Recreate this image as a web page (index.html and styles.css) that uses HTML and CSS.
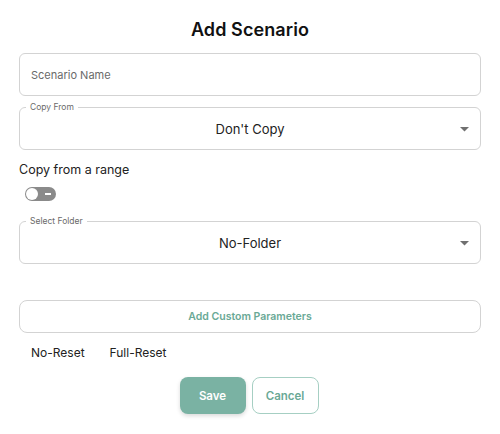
FILE: index.html
```html
<!DOCTYPE html>
<html>
<head>
<meta charset="utf-8">
<link rel="stylesheet" href="styles.css">
</head>
<body>
<div class="dialog">
  <h1 class="title">Add Scenario</h1>
  <div class="field input-field">
    <span class="placeholder">Scenario Name</span>
  </div>
  <div class="field select-field first-select">
    <span class="label">Copy From</span>
    <span class="value">Don't Copy</span>
    <svg class="arrow" width="9" height="5" viewBox="0 0 9 5"><path d="M0 0 L9 0 L4.5 4.5 Z" fill="#707070"/></svg>
  </div>
  <div class="range-label">Copy from a range</div>
  <div class="toggle"><span class="knob"></span><span class="dash"></span></div>
  <div class="field select-field folder-select">
    <span class="label">Select Folder</span>
    <span class="value">No-Folder</span>
    <svg class="arrow" width="9" height="5" viewBox="0 0 9 5"><path d="M0 0 L9 0 L4.5 4.5 Z" fill="#707070"/></svg>
  </div>
  <button class="custom-btn">Add Custom Parameters</button>
  <div class="resets">
    <span>No-Reset</span>
    <span>Full-Reset</span>
  </div>
  <div class="actions">
    <button class="save">Save</button>
    <button class="cancel">Cancel</button>
  </div>
</div>
</body>
</html>
```
FILE: styles.css
```css
* { box-sizing: border-box; }
html, body { margin: 0; padding: 0; background: #fff; }
body { font-family: Inter, "Noto Sans", sans-serif; color: #222; }
.dialog {
  width: 500px;
  height: 434px;
  padding: 0 19px 0 19px;
  display: flex;
  flex-direction: column;
}
.title {
  margin: 19px 0 0 0;
  height: 22px;
  line-height: 22px;
  text-align: center;
  font-size: 18px;
  font-weight: 600;
  color: #111;
  letter-spacing: 0.1px;
}
.field {
  border: 1px solid #d3d3d3;
  border-radius: 6px;
  margin: 0;
  width: 462px;
  flex-shrink: 0;
}
.input-field {
  margin-top: 12px;
  height: 43px;
  display: flex;
  align-items: center;
  padding-left: 11px;
}
.placeholder {
  font-size: 11px;
  color: #6a6a6a;
}
.select-field {
  position: relative;
  height: 43px;
  display: flex;
  align-items: center;
  justify-content: center;
}
.label {
  position: absolute;
  left: 6px;
  top: -6px;
  font-size: 8.5px;
  line-height: 10px;
  color: #6a6a6a;
  padding: 0 4px;
  background: #fff;
}
.first-select { margin-top: 11px; }
.folder-select { margin-top: 20px; }
.value {
  font-size: 13px;
  color: #222;
}
.arrow {
  position: absolute;
  right: 11px;
  top: 19px;
}
.range-label {
  margin-top: 12px;
  font-size: 12.5px;
  line-height: 16px;
  color: #222;
}
.toggle {
  margin-top: 9px;
  margin-left: 6px;
  width: 31px;
  height: 14px;
  border-radius: 7px;
  background: #8a8a8a;
  display: flex;
  align-items: center;
  justify-content: space-between;
  padding: 0 5px 0 1px;
}
.knob {
  width: 12px;
  height: 12px;
  border-radius: 50%;
  background: #fff;
}
.dash {
  width: 6px;
  height: 1.5px;
  background: #fff;
}
.custom-btn {
  margin-top: 36px;
  width: 462px;
  height: 33px;
  flex-shrink: 0;
  border: 1px solid #d3d3d3;
  border-radius: 8px;
  background: #fff;
  font-family: Inter, "Noto Sans", sans-serif;
  font-size: 10.5px;
  font-weight: 600;
  color: #6aa996;
}
.resets {
  margin-top: 12px;
  padding-left: 12px;
  display: flex;
  gap: 25px;
  font-size: 12px;
  color: #222;
  line-height: 15px;
}
.actions {
  margin-top: 17px;
  display: flex;
  justify-content: center;
  gap: 6px;
  padding-right: 2px;
}
.actions button {
  height: 37px;
  border-radius: 8px;
  font-family: Inter, "Noto Sans", sans-serif;
  font-size: 11.5px;
  font-weight: 600;
  padding-top: 2px;
}
.save {
  width: 66px;
  background: #7ab2a3;
  border: none;
  color: #fff;
  box-shadow: 0 2px 4px rgba(0,0,0,0.15);
}
.cancel {
  width: 67px;
  background: #fff;
  border: 1px solid #a6cfc3;
  color: #6aa996;
}
```
